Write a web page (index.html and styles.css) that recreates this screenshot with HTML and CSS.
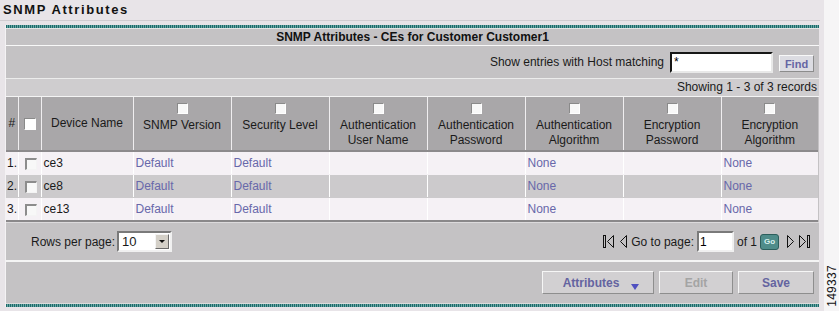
FILE: index.html
```html
<!DOCTYPE html>
<html lang="en">
<head>
    <meta charset="UTF-8">
    <title>SNMP Attributes</title>
    <link rel="stylesheet" href="styles.css">
</head>
<body>
    <div class="page">
        <div class="main">
            <div class="page-title">SNMP Attributes</div>

            <div class="panel">
                <div class="teal-bar"></div>
                <div class="caption">SNMP Attributes - CEs for Customer Customer1</div>

                <div class="search-row">
                    <label>Show entries with Host matching</label>
                    <input type="text" class="host-input" value="*">
                    <button class="find-btn">Find</button>
                </div>

                <div class="count-row">Showing 1 - 3 of 3 records</div>

                <table class="grid">
                    <colgroup>
                        <col style="width:12px">
                        <col style="width:23px">
                        <col style="width:92px">
                        <col style="width:98px">
                        <col style="width:98px">
                        <col style="width:98px">
                        <col style="width:98px">
                        <col style="width:98px">
                        <col style="width:98px">
                        <col style="width:97px">
                    </colgroup>
                    <thead>
                        <tr>
                            <th class="mid">#</th>
                            <th class="mid"><span class="cb cb-head"></span></th>
                            <th class="mid">Device Name</th>
                            <th><span class="cb"></span>SNMP Version</th>
                            <th><span class="cb"></span>Security Level</th>
                            <th><span class="cb"></span>Authentication<br>User Name</th>
                            <th><span class="cb"></span>Authentication<br>Password</th>
                            <th><span class="cb"></span>Authentication<br>Algorithm</th>
                            <th><span class="cb"></span>Encryption<br>Password</th>
                            <th><span class="cb"></span>Encryption<br>Algorithm</th>
                        </tr>
                    </thead>
                    <tbody>
                        <tr>
                            <td class="num">1.</td>
                            <td><span class="cb cb-row"></span></td>
                            <td>ce3</td>
                            <td><a href="#">Default</a></td>
                            <td><a href="#">Default</a></td>
                            <td></td>
                            <td></td>
                            <td><a href="#">None</a></td>
                            <td></td>
                            <td><a href="#">None</a></td>
                        </tr>
                        <tr class="alt">
                            <td class="num">2.</td>
                            <td><span class="cb cb-row"></span></td>
                            <td>ce8</td>
                            <td><a href="#">Default</a></td>
                            <td><a href="#">Default</a></td>
                            <td></td>
                            <td></td>
                            <td><a href="#">None</a></td>
                            <td></td>
                            <td><a href="#">None</a></td>
                        </tr>
                        <tr>
                            <td class="num">3.</td>
                            <td><span class="cb cb-row"></span></td>
                            <td>ce13</td>
                            <td><a href="#">Default</a></td>
                            <td><a href="#">Default</a></td>
                            <td></td>
                            <td></td>
                            <td><a href="#">None</a></td>
                            <td></td>
                            <td><a href="#">None</a></td>
                        </tr>
                    </tbody>
                </table>

                <div class="pager-row">
                    <div class="rows-per-page">
                        <span>Rows per page:</span>
                        <span class="select">10<span class="select-arrow"></span></span>
                    </div>
                    <div class="pager">
                        <svg class="pg-icon" width="12" height="14" viewBox="0 0 12 14">
                            <rect x="0.5" y="0.5" width="2" height="12" fill="none" stroke="#111"/>
                            <path d="M10.5 0.5 L4.5 6.5 L10.5 12.5 Z" fill="none" stroke="#111"/>
                        </svg>
                        <svg class="pg-icon" width="8" height="14" viewBox="0 0 8 14">
                            <path d="M6.5 0.5 L0.5 6.5 L6.5 12.5 Z" fill="none" stroke="#111"/>
                        </svg>
                        <span>Go to page:</span>
                        <input type="text" class="page-input" value="1">
                        <span>of 1</span>
                        <span class="go-btn">Go</span>
                        <svg class="pg-icon" width="8" height="14" viewBox="0 0 8 14">
                            <path d="M1.5 0.5 L7.5 6.5 L1.5 12.5 Z" fill="none" stroke="#111"/>
                        </svg>
                        <svg class="pg-icon" width="12" height="14" viewBox="0 0 12 14">
                            <path d="M0.5 0.5 L6.5 6.5 L0.5 12.5 Z" fill="none" stroke="#111"/>
                            <rect x="8.5" y="0.5" width="2" height="12" fill="none" stroke="#111"/>
                        </svg>
                    </div>
                </div>

                <div class="button-row">
                    <button class="btn btn-attr">Attributes<span class="drop-arrow"></span></button>
                    <button class="btn btn-disabled">Edit</button>
                    <button class="btn btn-save">Save</button>
                </div>
                <div class="teal-bar teal-bottom"></div>
            </div>
        </div>
        <div class="side">
            <span class="fig-num">149337</span>
        </div>
    </div>
</body>
</html>
```

FILE: styles.css
```css
body {
    margin: 0;
    background-color: #e8e4e8;
    font-family: "Liberation Sans", Arial, sans-serif;
    font-size: 12px;
    color: #1a1a1a;
}
.page {
    display: flex;
    height: 311px;
}
.main {
    width: 824px;
}
.side {
    flex: 1;
    background-color: #f6f5f6;
    display: flex;
    align-items: flex-end;
    justify-content: center;
    padding-bottom: 4px;
}
.fig-num {
    writing-mode: vertical-rl;
    transform: rotate(180deg);
    font-size: 12px;
    color: #111;
    letter-spacing: 0.3px;
}
.page-title {
    height: 20px;
    line-height: 20px;
    padding-left: 3px;
    font-size: 13px;
    font-weight: bold;
    letter-spacing: 1.6px;
    color: #111;
    border-bottom: 1px solid #d0ccd0;
    margin-right: 4px;
}
.panel {
    margin-top: 4px;
    margin-left: 5px;
    width: 813px;
    border-left: 1px solid #f4f2f4;
    background-color: #c4c2c4;
}
.teal-bar {
    height: 3px;
    background: repeating-linear-gradient(90deg, #1c6a6a 0 1px, #6aa6a4 1px 2px);
    border-bottom: 1px solid #e4e4e4;
}
.teal-bottom {
    border-bottom: none;
    border-top: 1px solid #dcdcdc;
}
.caption {
    height: 16px;
    line-height: 16px;
    text-align: center;
    font-weight: bold;
    color: #111;
    border-bottom: 1px solid #f8f8f8;
}
.search-row {
    height: 32px;
    display: flex;
    align-items: center;
    justify-content: flex-end;
    padding-right: 5px;
    border-bottom: 1px solid #ececec;
}
.search-row label {
    margin-right: 6px;
}
.host-input {
    width: 103px;
    height: 21px;
    box-sizing: border-box;
    border: 2px inset #8a8a8a;
    border-color: #6c6c6c #e8e8e8 #e8e8e8 #6c6c6c;
    padding: 0 2px;
    font-family: "Liberation Sans", Arial, sans-serif;
    font-size: 12px;
    margin-right: 6px;
    background-color: #fff;
}
.find-btn {
    width: 35px;
    height: 17px;
    box-sizing: border-box;
    padding: 0;
    margin-top: 3px;
    font-family: "Liberation Sans", Arial, sans-serif;
    font-size: 11px;
    font-weight: bold;
    color: #6666a4;
    background-color: #dcdce2;
    border: 1px solid;
    border-color: #f8f8f8 #8c8c8c #8c8c8c #f8f8f8;
}
.count-row {
    height: 17px;
    line-height: 17px;
    text-align: right;
    padding-right: 2px;
    background-color: #cfcdcf;
    border-bottom: 1px solid #f4f4f4;
}
.grid {
    width: 812px;
    table-layout: fixed;
    border-collapse: collapse;
    border-bottom: 2px solid #8a888a;
}
.grid th {
    background-color: #a9a7a9;
    font-weight: normal;
    color: #1a1a1a;
    height: 54px;
    padding: 6px 0 0;
    vertical-align: top;
    line-height: 15px;
    border-left: 1px solid #f0eef0;
    border-bottom: 2px solid #8c8a8c;
    box-sizing: border-box;
}
.grid th:first-child {
    border-left: none;
}
.grid th.mid {
    vertical-align: middle;
    padding: 0;
}
.grid td {
    height: 22px;
    padding: 0 0 0 2px;
    background-color: #f5f1f5;
    border-left: 1px solid #ffffff;
    border-bottom: 1px solid #f5f1f5;
    white-space: nowrap;
}
.grid td:first-child {
    border-left: none;
    padding-left: 1px;
}
.grid tr.alt td {
    background-color: #cccacc;
    border-bottom-color: #cccacc;
}
.grid tbody tr:last-child td {
    border-bottom: none;
}
.grid a {
    color: #6868aa;
    text-decoration: none;
}
.cb {
    display: block;
    width: 11px;
    height: 11px;
    margin: 0 auto 4px;
    box-sizing: border-box;
    background-color: #f8f8f8;
    border: 1px solid;
    border-color: #8a8a8a #ffffff #ffffff #8a8a8a;
}
.cb-head {
    width: 12px;
    height: 12px;
    margin-bottom: 0;
    background-color: #fff;
}
.cb-row {
    width: 12px;
    height: 12px;
    margin: 1px auto 0;
    border-width: 2px 1px 1px 2px;
    border-color: #8c8c8c #f4f4f4 #f4f4f4 #8c8c8c;
}
.pager-row {
    height: 37px;
    display: flex;
    align-items: center;
    justify-content: space-between;
    padding: 0 5px 0 25px;
    border-top: 1px solid #dcdadc;
    border-bottom: 2px solid #f4f4f4;
}
.rows-per-page {
    display: flex;
    align-items: center;
    gap: 2px;
}
.select {
    position: relative;
    width: 55px;
    height: 21px;
    box-sizing: border-box;
    background-color: #fff;
    border: 2px solid;
    border-color: #7a7a7a #f0f0f0 #f0f0f0 #7a7a7a;
    padding-left: 3px;
    line-height: 17px;
    font-size: 13px;
}
.select-arrow {
    position: absolute;
    right: 1px;
    top: 1px;
    width: 14px;
    height: 15px;
    box-sizing: border-box;
    background-color: #d4d0c8;
    border: 1px solid;
    border-color: #f4f4f4 #6a6a6a #6a6a6a #f4f4f4;
}
.select-arrow::after {
    content: "";
    position: absolute;
    left: 3px;
    top: 5px;
    border-left: 3px solid transparent;
    border-right: 3px solid transparent;
    border-top: 3px solid #111;
}
.pager {
    display: flex;
    align-items: center;
}
.pg-icon {
    margin: 0 3px 0 2px;
}
.page-input {
    width: 37px;
    height: 21px;
    box-sizing: border-box;
    border: 2px solid;
    border-color: #7a7a7a #f0f0f0 #f0f0f0 #7a7a7a;
    padding: 0 1px;
    margin: 0 3px;
    font-family: "Liberation Sans", Arial, sans-serif;
    font-size: 12px;
    background-color: #fff;
}
.go-btn {
    width: 17px;
    height: 14px;
    margin: 0 5px 0 3px;
    border-radius: 3px;
    background-color: #4f8c8a;
    border: 1px solid #2c5e5c;
    color: #d8f0ee;
    font-size: 8px;
    font-weight: bold;
    line-height: 14px;
    text-align: center;
}
.button-row {
    height: 41px;
    display: flex;
    align-items: center;
    justify-content: flex-end;
    gap: 5px;
    padding-right: 5px;
}
.btn {
    height: 23px;
    box-sizing: border-box;
    font-family: "Liberation Sans", Arial, sans-serif;
    font-size: 12px;
    font-weight: bold;
    color: #6464a0;
    background-color: #d2d0d2;
    border: 1px solid;
    border-color: #f6f6f6 #8e8e8e #8e8e8e #f6f6f6;
    padding: 0;
}
.btn-attr {
    width: 112px;
    position: relative;
    padding-right: 14px;
}
.drop-arrow {
    position: absolute;
    right: 14px;
    bottom: 3px;
    border-left: 4px solid transparent;
    border-right: 4px solid transparent;
    border-top: 6px solid #5050c0;
}
.btn-disabled {
    width: 74px;
    color: #a4a4a4;
}
.btn-save {
    width: 76px;
}
```
